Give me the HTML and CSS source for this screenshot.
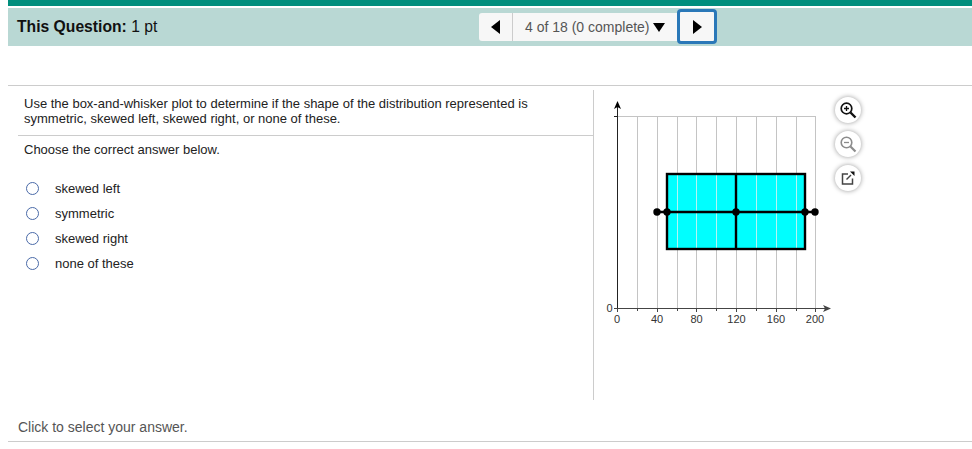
FILE: index.html
```html
<!DOCTYPE html>
<html>
<head>
    <title>This Question</title>
    <link rel="stylesheet" href="styles.css">
</head>
<body>
    <div class="top-strip"></div>

    <!-- Question bar with pager -->
    <div class="question-bar">
        <div class="points"><b>This Question:</b> 1 pt</div>
        <div class="pager">
            <div class="pager-btn prev"><span class="tri-left"></span></div>
            <div class="pager-label">4 of 18 (0 complete)<span class="tri-down"></span></div>
            <div class="pager-btn next"><span class="tri-right"></span></div>
        </div>
    </div>

    <div class="content">
        <div class="question">
            <p class="prompt">Use the box-and-whisker plot to determine if the shape of the distribution represented is symmetric, skewed left, skewed right, or none of these.</p>
            <p class="choose">Choose the correct answer below.</p>
            <div class="answers">
                <label class="answer"><span class="radio"></span>skewed left</label>
                <label class="answer"><span class="radio"></span>symmetric</label>
                <label class="answer"><span class="radio"></span>skewed right</label>
                <label class="answer"><span class="radio"></span>none of these</label>
            </div>
        </div>

        <div class="figure">
            <svg class="plot" width="240" height="240" viewBox="0 0 240 240">
                <g stroke="#c4c4c4" stroke-width="1">
                    <path d="M24 26.5H222.5"/>
                    <path d="M44.5 26V218M64.5 26V218M84.5 26V218M103.5 26V218M123.5 26V218M143.5 26V218M163.5 26V218M183.5 26V218M203.5 26V218M222.5 26V218"/>
                </g>
                <!-- box fill, grid shows through pale -->
                <rect x="74" y="84" width="138" height="75" fill="#00ffff"/>
                <path d="M84.5 84V159M103.5 84V159M123.5 84V159M163.5 84V159M183.5 84V159M203.5 84V159" stroke="#b5f3f3"/>
                <g stroke="#000" stroke-width="2.4" fill="none">
                    <rect x="74" y="84" width="138" height="75"/>
                    <path d="M143 84V159M64 122H222"/>
                </g>
                <g fill="#000">
                    <circle cx="64" cy="122" r="3.7"/>
                    <circle cx="74" cy="122" r="3.7"/>
                    <circle cx="143" cy="122" r="3.7"/>
                    <circle cx="212" cy="122" r="3.7"/>
                    <circle cx="222" cy="122" r="3.7"/>
                </g>
                <path d="M24.5 218V14" stroke="#222" stroke-width="1"/>
                <path d="M24.5 11L28 19L24.5 17L21 19Z" fill="#000"/>
                <path d="M21 26.5H24" stroke="#222"/>
                <path d="M21 218.5H232" stroke="#444"/>
                <path d="M24.5 218V222M44.5 218V221M64.5 218V222M84.5 218V221M103.5 218V222M123.5 218V221M143.5 218V222M163.5 218V221M183.5 218V222M203.5 218V221M222.5 218V222" stroke="#444"/>
                <path d="M230 215L238 218.5L230 222L232 218.5Z" fill="#444"/>
                <g class="tick-labels" text-anchor="middle">
                    <text x="16.5" y="222">0</text>
                    <text x="24" y="233">0</text>
                    <text x="64" y="233">40</text>
                    <text x="103.5" y="233">80</text>
                    <text x="143.5" y="233">120</text>
                    <text x="183" y="233">160</text>
                    <text x="222" y="233">200</text>
                </g>
            </svg>

            <div class="tools">
                <div class="tool">
                    <svg width="18" height="18" viewBox="0 0 18 18" fill="none" stroke="#111" stroke-width="1.7">
                        <circle cx="7.5" cy="7.5" r="5.3"/>
                        <path d="M11.5 11.5L16.5 16.5" stroke-width="2.4"/>
                        <path d="M5 7.5H10M7.5 5V10" stroke-width="1.3"/>
                    </svg>
                </div>
                <div class="tool">
                    <svg width="18" height="18" viewBox="0 0 18 18" fill="none" stroke="#8c8c8c" stroke-width="1.6">
                        <circle cx="7.5" cy="7.5" r="5.3"/>
                        <path d="M11.5 11.5L16.5 16.5" stroke-width="2.2"/>
                        <path d="M5 7.5H10" stroke-width="1.3"/>
                    </svg>
                </div>
                <div class="tool">
                    <svg width="18" height="18" viewBox="0 0 18 18" fill="none" stroke="#444" stroke-width="1.5">
                        <path d="M9 5H3.5V15H13.5V9.5"/>
                        <path d="M7.5 10.5L12 6" stroke-width="1.5"/>
                        <path d="M11 2.5H15.5V7Z" fill="#111" stroke="none"/>
                    </svg>
                </div>
            </div>
        </div>
    </div>

    <div class="status">Click to select your answer.</div>
</body>
</html>
```

FILE: styles.css
```css
body {
    margin: 0 0 0 8px;
    background-color: #fff;
    font-family: "Liberation Sans", Arial, sans-serif;
    font-size: 13px;
    color: #222;
}

.top-strip {
    height: 6px;
    background-color: #008e7d;
}

.question-bar {
    display: flex;
    height: 38px;
    margin-top: 2px;
    background-color: #b9d8d4;
}

.points {
    width: 471px;
    padding: 10px 0 0 9px;
    box-sizing: border-box;
    font-size: 15.7px;
    color: #111;
}

/* Pager sits in the middle of the bar */
.pager {
    display: flex;
    height: 28px;
    margin-top: 5px;
    background-color: #f7f7f7;
    border-radius: 3px;
}

.pager-btn {
    display: flex;
    justify-content: center;
    align-items: center;
    box-sizing: border-box;
}

.prev {
    width: 34px;
    border-right: 1px solid #ccc;
}

.next {
    width: 40px;
    height: 35px;
    margin-top: -4px;
    background-color: #f7f7f7;
    border: 3px solid #2a78b8;
    border-radius: 4px;
}

.pager-label {
    display: flex;
    align-items: center;
    width: 164px;
    padding-left: 12px;
    box-sizing: border-box;
    font-size: 14px;
    color: #555;
}

.tri-left {
    border-top: 7px solid transparent;
    border-bottom: 7px solid transparent;
    border-right: 9px solid #000;
}

.tri-right {
    border-top: 7px solid transparent;
    border-bottom: 7px solid transparent;
    border-left: 9px solid #000;
}

.tri-down {
    margin-left: 3px;
    border-left: 6.5px solid transparent;
    border-right: 6.5px solid transparent;
    border-top: 9px solid #000;
}

.content {
    display: flex;
    height: 315px;
    margin-top: 39px;
    padding-top: 4px;
    border-top: 1px solid #ccc;
}

.question {
    width: 575px;
    height: 310px;
    margin-left: 10px;
    border-right: 1px solid #ccc;
}

.prompt {
    margin: 0;
    padding: 6px 40px 9px 6px;
    line-height: 15px;
    border-bottom: 1px solid #ccc;
}

.choose {
    margin: 0;
    padding: 6px 0 0 6px;
    line-height: 15px;
}

.answers {
    margin-top: 19px;
    margin-left: 8px;
}

.answer {
    display: flex;
    align-items: center;
    height: 25px;
}

.radio {
    width: 11px;
    height: 11px;
    margin-right: 16px;
    border: 1.5px solid #4a6aa8;
    border-radius: 50%;
}

.figure {
    display: flex;
}

.plot {
    display: block;
    margin-left: -1px;
}

.tick-labels {
    font-size: 11px;
    fill: #333;
}

.tools {
    display: flex;
    flex-direction: column;
    gap: 8px;
    margin: 7px 0 0 2px;
}

.tool {
    display: flex;
    justify-content: center;
    align-items: center;
    width: 26px;
    height: 26px;
    background-color: #fff;
    border-radius: 50%;
    box-shadow: 0px 0px 5px rgba(0, 0, 0, 0.4);
}

.status {
    margin-top: 14px;
    padding: 0 0 6px 10px;
    font-size: 14px;
    line-height: 16px;
    color: #555;
    border-bottom: 1px solid #ccc;
}
```
